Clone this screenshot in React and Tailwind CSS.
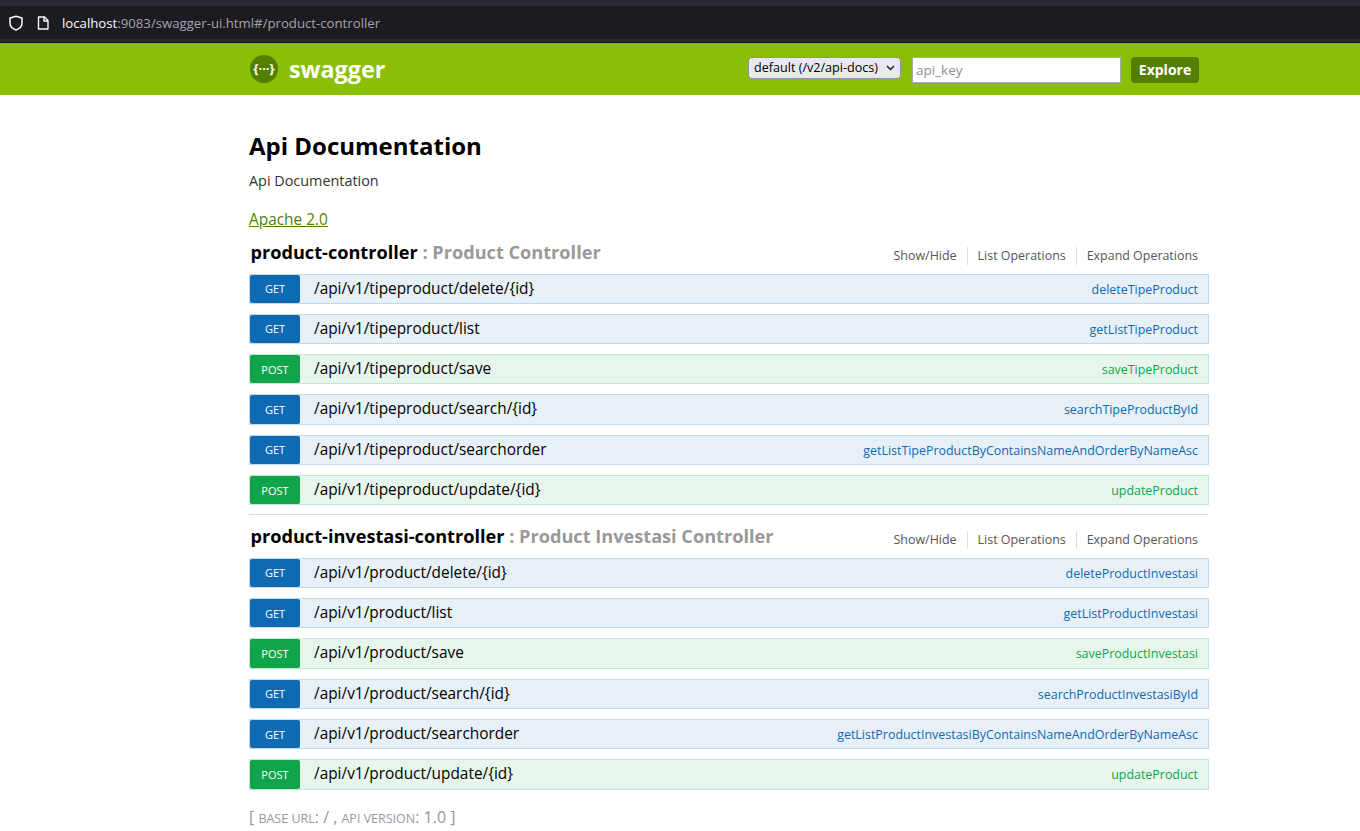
import React from "react";

const font = "font-['Open_Sans','Noto_Sans',sans-serif]";

function Row({ method, path, name }) {
  const get = method === "GET";
  return (
    <li className={`flex h-[30.3px] mb-[10px] items-stretch border ${get ? "bg-[#e7f0f7] border-[#c3d9ec]" : "bg-[#e7f6ec] border-[#c3e8d1]"}`}>
      <span className={`w-[50px] pt-[1.5px] rounded-[2px] flex items-center justify-center text-[11px] text-white ${get ? "bg-[#0f6ab4]" : "bg-[#10a54a]"}`}>{method}</span>
      <span className="ml-[14px] flex-1 text-[15.4px] leading-[28px] text-black">{path}</span>
      <span className={`pr-[10px] text-[12.45px] leading-[30px] ${get ? "text-[#0f6ab4]" : "text-[#10a54a]"}`}>{name}</span>
    </li>
  );
}

function Section({ title, sub, rows, border }) {
  return (
    <section className={border ? "border-b border-[#dddddd] mb-[7.5px]" : ""}>
      <div className={`flex items-center justify-between h-[26px] pl-[1.5px] pr-[11px] ${border ? "mb-[8.5px]" : "mb-[9px]"}`}>
        <h2 className="text-[18.15px] font-bold text-black leading-[26px]">
          {title} <span className="text-[#999999]">: {sub}</span>
        </h2>
        <div className="flex items-center text-[12.45px] text-[#555555] mt-[8px]">
          <span className="pr-[10px] border-r border-[#dddddd] leading-[18px]">Show/Hide</span>
          <span className="px-[10px] border-r border-[#dddddd] leading-[18px]">List Operations</span>
          <span className="pl-[10px] leading-[18px]">Expand Operations</span>
        </div>
      </div>
      <ul className={border ? "-mb-[1px]" : ""}>
        {rows.map((r) => (
          <Row key={r[1]} method={r[0]} path={r[1]} name={r[2]} />
        ))}
      </ul>
    </section>
  );
}

const first = [
  ["GET", "/api/v1/tipeproduct/delete/{id}", "deleteTipeProduct"],
  ["GET", "/api/v1/tipeproduct/list", "getListTipeProduct"],
  ["POST", "/api/v1/tipeproduct/save", "saveTipeProduct"],
  ["GET", "/api/v1/tipeproduct/search/{id}", "searchTipeProductById"],
  ["GET", "/api/v1/tipeproduct/searchorder", "getListTipeProductByContainsNameAndOrderByNameAsc"],
  ["POST", "/api/v1/tipeproduct/update/{id}", "updateProduct"],
];
const second = [
  ["GET", "/api/v1/product/delete/{id}", "deleteProductInvestasi"],
  ["GET", "/api/v1/product/list", "getListProductInvestasi"],
  ["POST", "/api/v1/product/save", "saveProductInvestasi"],
  ["GET", "/api/v1/product/search/{id}", "searchProductInvestasiById"],
  ["GET", "/api/v1/product/searchorder", "getListProductInvestasiByContainsNameAndOrderByNameAsc"],
  ["POST", "/api/v1/product/update/{id}", "updateProduct"],
];

export default function App() {
  return (
    <div className={`h-[831px] overflow-hidden bg-white ${font}`}>
      <div className="h-[43px] bg-[#2b2a33] pt-[6px] border-b border-[#0c0c0d]">
        <div className="h-[33px] bg-[#1c1b22] flex items-center font-['Open_Sans',sans-serif]">
          <svg className="ml-[8px]" width="16" height="16" viewBox="0 0 16 16" fill="none" stroke="#fbfbfe" strokeWidth="1.5">
            <path d="M8 1.2 14 3v5c0 3.4-2.6 5.8-6 7-3.4-1.2-6-3.6-6-7V3z" strokeLinejoin="round" />
          </svg>
          <svg className="ml-[12px]" width="14" height="14" viewBox="0 0 14 14" fill="none" stroke="#fbfbfe" strokeWidth="1.4">
            <path d="M2.5 1h6L12 4.5V13H2.5z" strokeLinejoin="round" />
            <path d="M8 1v4h4" />
          </svg>
          <span className="ml-[12px] mt-[2px] text-[13.2px] text-[#a3a3aa]"><span className="text-[#fbfbfe]">localhost</span>:9083/swagger-ui.html#/product-controller</span>
        </div>
      </div>

      <header className="h-[52px] bg-[#89bf04]">
        <div className="w-[960px] ml-[249px] pl-[1px] flex items-center h-full">
          <div className="flex items-center">
            <span className="w-[28px] h-[28px] rounded-full bg-[#547f00] flex items-center justify-center text-white text-[13px] font-bold">{"{···}"}</span>
            <span className="ml-[11px] text-[23.3px] font-bold text-white">swagger</span>
          </div>
          <div className="relative ml-auto mb-[2px] w-[153px] h-[22px]">
            <select className="block appearance-none w-full h-full text-[12.6px] text-black bg-[#e9e9ed] border border-[#8f8f9d] rounded-[4px] pl-[5px]">
              <option>default (/v2/api-docs)</option>
            </select>
            <svg className="absolute right-[6px] top-[8px] pointer-events-none" width="9" height="6" viewBox="0 0 9 6" fill="none" stroke="#222222" strokeWidth="1.5">
              <path d="M1 1l3.5 3.5L8 1" />
            </svg>
          </div>
          <input placeholder="api_key" className="ml-[11px] mt-[2px] w-[209px] h-[26px] bg-white border border-[#aaaaaa] px-[3px] text-[13.5px] placeholder:text-[#8f8f8f] outline-none" />
          <button className="ml-[10px] mr-[10px] mt-[2px] pb-[2px] w-[68px] h-[26px] rounded-[4px] bg-[#547f00] text-white text-[14px] font-bold">Explore</button>
        </div>
      </header>

      <main className="w-[960px] ml-[249px] pt-[35px]">
        <h1 className="text-[24px] leading-[32px] font-bold text-black">Api Documentation</h1>
        <p className="mt-[9px] text-[14.4px] leading-[20px] text-[#333333]">Api Documentation</p>
        <a className="block mt-[18px] text-[15.4px] leading-[22px] text-[#547f00] underline">Apache 2.0</a>
        <div className="mt-[8px]">
          <Section title="product-controller" sub="Product Controller" rows={first} border />
          <Section title="product-investasi-controller" sub="Product Investasi Controller" rows={second} />
        </div>
        <div className="mt-[17px] text-[#999999] text-[16px] leading-[20px]">
          [ <span className="text-[12.5px] uppercase">Base URL</span>: / , <span className="text-[12.5px] uppercase">Api Version</span>: 1.0 ]
        </div>
      </main>
    </div>
  );
}
